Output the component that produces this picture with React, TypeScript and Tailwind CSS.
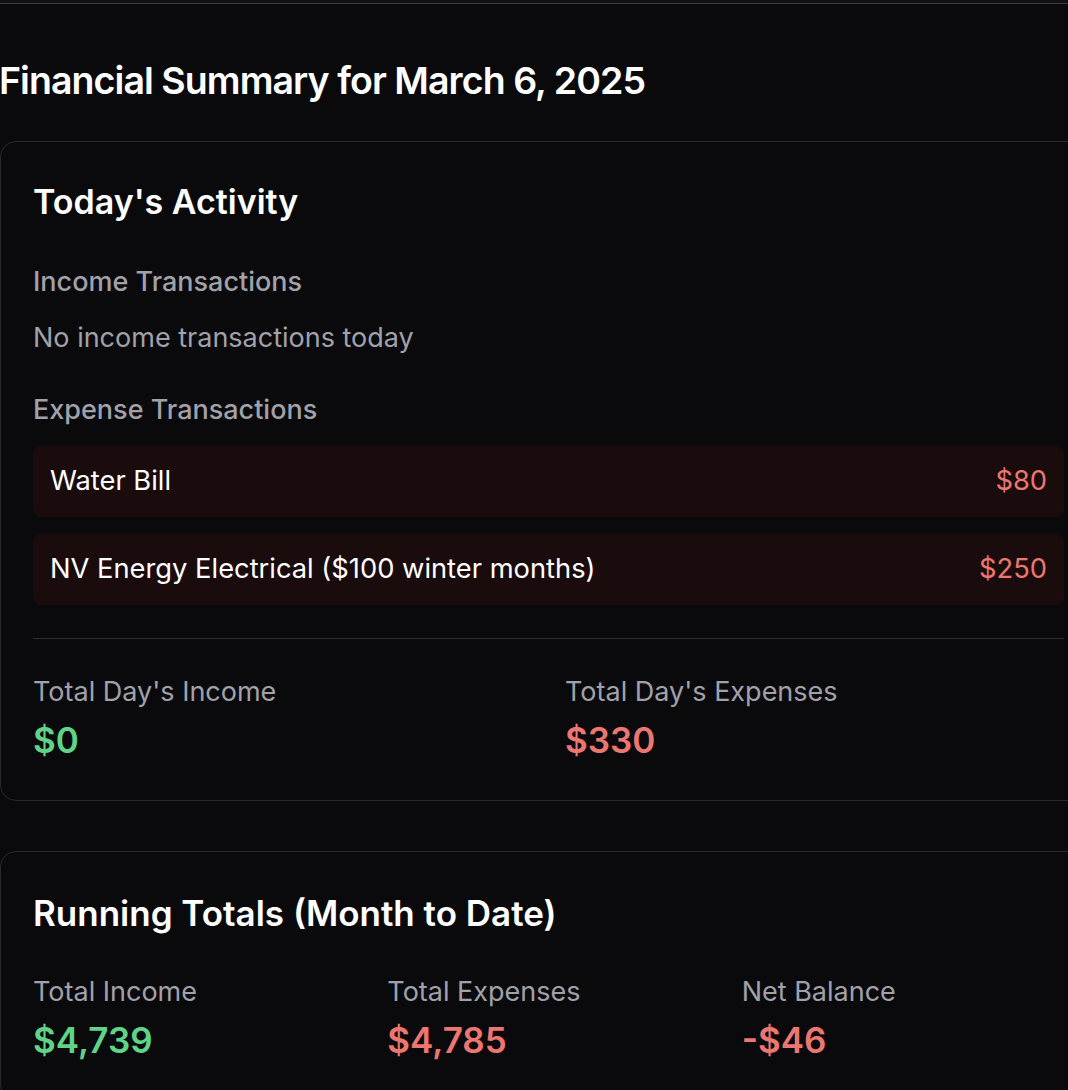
const expenses = [
  { name: "Water Bill", amount: "$80" },
  { name: "NV Energy Electrical ($100 winter months)", amount: "$250" },
];

const running = [
  { label: "Total Income", value: "$4,739", tone: "text-[#5fd487]" },
  { label: "Total Expenses", value: "$4,785", tone: "text-[#ec7670]" },
  { label: "Net Balance", value: "-$46", tone: "text-[#ec7670]" },
];

function Card({ children }: { children: React.ReactNode }) {
  return (
    <div className="w-[1096px] rounded-2xl border border-[#2a2a2e] bg-[#0a0a0c] px-8 pt-8 pb-[39px]">
      {children}
    </div>
  );
}

function Stat({ label, value, tone }: { label: string; value: string; tone: string }) {
  return (
    <div>
      <p className="text-[27px] leading-[36px] text-[#a1a1aa]">{label}</p>
      <p className={`mt-[9px] text-[35px] font-semibold leading-[42px] ${tone}`}>{value}</p>
    </div>
  );
}

export default function App() {
  return (
    <div
      className="h-[1090px] w-[1068px] overflow-hidden bg-[#0a0a0c] text-white"
      style={{ fontFamily: "Inter, 'Noto Sans', sans-serif" }}
    >
      <div className="h-[4px] border-b border-[#3a3a3e] bg-[#111113]" />

      <h1 className="-ml-[1px] mt-[54px] text-[37.5px] font-semibold leading-[45px] tracking-tight">
        Financial Summary for March 6, 2025
      </h1>

      <div className="mt-[38px] flex flex-col gap-[50px]">
        <Card>
          <h2 className="pt-[8px] text-[34px] font-semibold leading-[40px]">
            Today's Activity
          </h2>

          <h3 className="mt-[42px] text-[27px] font-medium leading-[36px] text-[#a1a1aa]">
            Income Transactions
          </h3>
          <p className="mt-[20px] text-[27px] leading-[36px] text-[#a1a1aa]">
            No income transactions today
          </p>

          <h3 className="mt-[36px] text-[27px] font-medium leading-[36px] text-[#a1a1aa]">
            Expense Transactions
          </h3>
          <div className="mt-[18px] flex w-[1031px] flex-col gap-[17px]">
            {expenses.map((e) => (
              <div
                key={e.name}
                className="flex h-[71px] items-center justify-between rounded-lg bg-[#1a0c0d] px-[17px] text-[27.3px]"
              >
                <span className="text-white">{e.name}</span>
                <span className="text-[#ec7670]">{e.amount}</span>
              </div>
            ))}
          </div>

          <div className="mt-[33px] grid w-[1031px] grid-cols-2 gap-[33px] border-t border-[#2e2e32] pt-[35px]">
            <Stat label="Total Day's Income" value="$0" tone="text-[#5fd487]" />
            <Stat label="Total Day's Expenses" value="$330" tone="text-[#ec7670]" />
          </div>
        </Card>

        <Card>
          <h2 className="pt-[9px] text-[35px] font-semibold leading-[40px]">
            Running Totals (Month to Date)
          </h2>
          <div className="mt-[41px] grid w-[1031px] grid-cols-3 gap-[32px]">
            {running.map((r) => (
              <Stat key={r.label} {...r} />
            ))}
          </div>
        </Card>
      </div>
    </div>
  );
}
